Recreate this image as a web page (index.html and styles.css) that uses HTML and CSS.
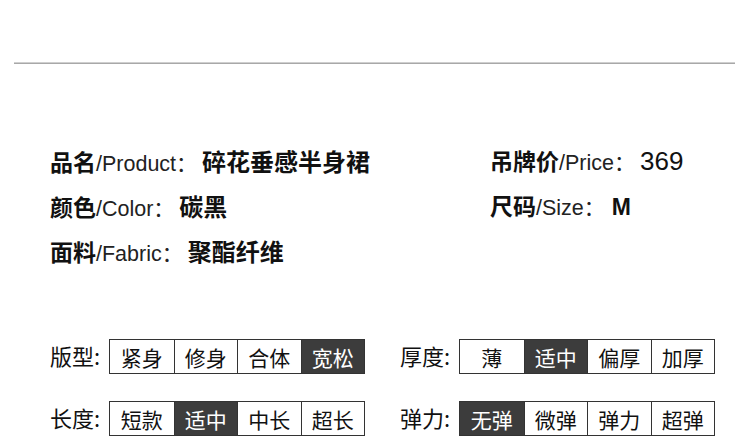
FILE: index.html
```html
<!DOCTYPE html>
<html lang="zh">
<head>
<meta charset="utf-8">
<link rel="stylesheet" href="styles.css">
</head>
<body>
<div class="page">
  <div class="rule"></div>
  <div class="info">
    <div class="col">
      <div class="row"><b class="k">品名</b><span class="en">/Product</span><span class="colon">：</span><b class="v">碎花垂感半身裙</b></div>
      <div class="row"><b class="k">颜色</b><span class="en">/Color</span><span class="colon">：</span><b class="v">碳黑</b></div>
      <div class="row"><b class="k">面料</b><span class="en">/Fabric</span><span class="colon">：</span><b class="v">聚酯纤维</b></div>
    </div>
    <div class="col">
      <div class="row"><b class="k">吊牌价</b><span class="en">/Price</span><span class="colon">：</span><span class="num">369</span></div>
      <div class="row"><b class="k">尺码</b><span class="en">/Size</span><span class="colon">：</span><span class="num m">M</span></div>
    </div>
  </div>
  <div class="opts">
    <div class="opt"><span class="lab">版型:</span><div class="box"><span class="c">紧身</span><span class="c">修身</span><span class="c">合体</span><span class="c on">宽松</span></div></div>
    <div class="opt"><span class="lab">厚度:</span><div class="box"><span class="c">薄</span><span class="c on">适中</span><span class="c">偏厚</span><span class="c">加厚</span></div></div>
    <div class="opt"><span class="lab">长度:</span><div class="box"><span class="c">短款</span><span class="c on">适中</span><span class="c">中长</span><span class="c">超长</span></div></div>
    <div class="opt"><span class="lab">弹力:</span><div class="box"><span class="c on">无弹</span><span class="c">微弹</span><span class="c">弹力</span><span class="c">超弹</span></div></div>
  </div>
</div>
</body>
</html>
```
FILE: styles.css
```css
* { box-sizing: border-box; }
html, body { margin: 0; padding: 0; background: #fff; }
body {
  font-family: "Liberation Sans", Arial, "Noto Sans CJK SC", sans-serif;
  color: #111;
  width: 750px;
  height: 445px;
  overflow: hidden;
}
.page { padding-top: 62px; }
.rule {
  margin-left: 14px;
  width: 721px;
  height: 2px;
  background: #a8a8a8;
  border-top: 1px solid #cfcfcf;
}
.info {
  display: grid;
  grid-template-columns: 440px 1fr;
  padding-left: 50px;
  margin-top: 74px;
}
.row {
  height: 45px;
  line-height: 45px;
  white-space: nowrap;
}
.k {
  font-family: "Noto Sans CJK SC", sans-serif;
  font-weight: 700;
  font-size: 23px;
  color: #111;
}
.en {
  font-size: 21.5px;
  color: #222;
  font-family: "Liberation Sans", sans-serif;
}
.colon {
  display: inline-block;
  font-family: "Noto Sans CJK SC", sans-serif;
  font-size: 21px;
  color: #222;
  width: 25px;
}
.v {
  font-family: "Noto Sans CJK SC", sans-serif;
  font-weight: 700;
  font-size: 24px;
  color: #111;
  margin-left: 1px;
}
.num {
  font-size: 26px;
  color: #111;
  margin-left: 1px;
}
.num.m { font-weight: 700; font-size: 23px; margin-left: 3px; }
.opts {
  display: grid;
  grid-template-columns: 350px 1fr;
  row-gap: 27px;
  padding-left: 50px;
  margin-top: 66px;
}
.opt {
  display: flex;
  align-items: center;
  height: 35px;
}
.lab {
  width: 59px;
  font-family: "Noto Sans CJK SC", sans-serif;
  font-size: 22px;
  color: #111;
  white-space: nowrap;
  margin-top: -3px;
}
.box {
  display: flex;
  border: 1.5px solid #333;
  height: 35px;
}
.c {
  width: 63.5px;
  display: flex;
  align-items: center;
  justify-content: center;
  font-family: "Noto Sans CJK SC", sans-serif;
  font-size: 21px;
  color: #111;
  border-left: 1px solid #333;
}
.c:first-child { border-left: 0; }
.c.on { background: #3c3c3c; color: #fff; }
```
